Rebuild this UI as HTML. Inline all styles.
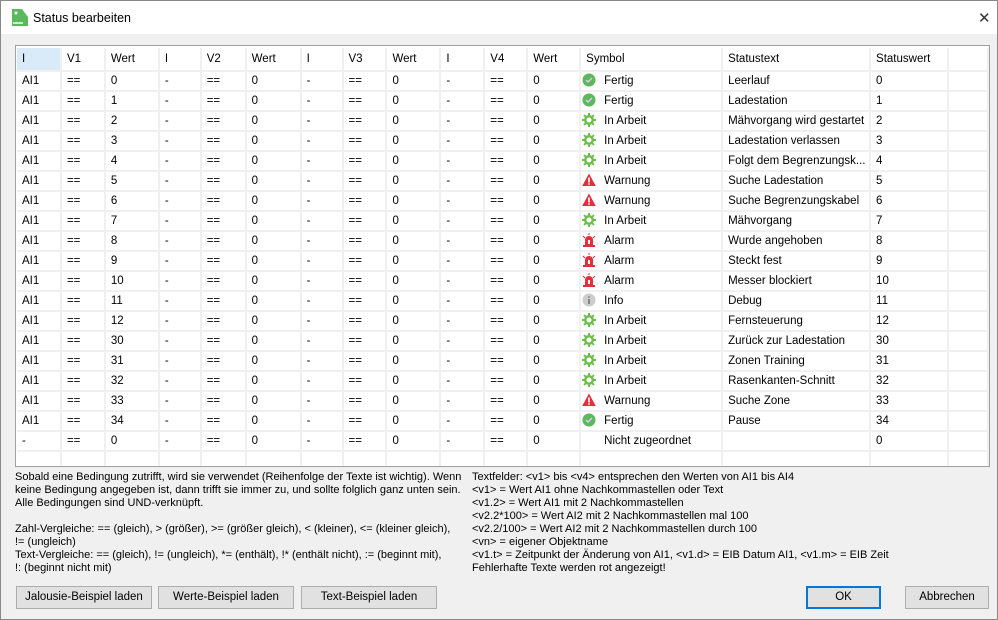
<!DOCTYPE html>
<html><head><meta charset="utf-8"><style>
*{margin:0;padding:0;box-sizing:border-box}
body{width:998px;height:620px;background:#f0f0f0;font-family:"Liberation Sans",sans-serif;font-size:11.5px;color:#000;position:relative;overflow:hidden}
.win{position:absolute;left:0;top:0;width:998px;height:620px;border:1px solid #888;background:#f0f0f0}
.title{position:absolute;left:0;top:0;width:996px;height:33px;background:#fff}
.title .t{position:absolute;left:32px;top:10px;font-size:12.5px}
.close{position:absolute;left:977px;top:8px;font-size:15px;color:#333}
.box{position:absolute;left:14px;top:44px;width:975px;height:422px;border:1px solid #a0a0a0;background:#fff;overflow:hidden}
table{border-collapse:collapse;table-layout:fixed;position:absolute;left:1px;top:2px}
td{height:20px;border-right:2px solid #f0f0f0;border-bottom:2px solid #f0f0f0;padding-left:5px;white-space:nowrap;overflow:hidden;vertical-align:middle}
tr.h td{height:23px;border-bottom:2px solid #f0f0f0}
td.s{padding-left:1px}
.ic{display:inline-block;width:14px;height:14px;vertical-align:middle;margin-right:8px;position:relative;top:-1px}
.txt{position:absolute;font-size:11px;line-height:13px;white-space:nowrap}
.btn{position:absolute;top:585px;height:23px;border:1px solid #adadad;background:#e1e1e1;text-align:center;line-height:21px;font-size:11.5px}
</style></head><body><div class="win">
<div class="title"><svg style="position:absolute;left:11px;top:8px" width="16" height="17"><path d="M0 0h10l6 8v9H0z" fill="#5cb85c"/><circle cx="4" cy="4" r="1.5" fill="#fff"/><rect x="1" y="13" width="10" height="2" fill="#c8f0c8"/></svg><span class="t">Status bearbeiten</span><span class="close">✕</span></div>
<div class="box"><table id="tb">
<colgroup><col style="width:44px"><col style="width:44px"><col style="width:54px"><col style="width:42px"><col style="width:45px"><col style="width:55px"><col style="width:42px"><col style="width:44px"><col style="width:54px"><col style="width:44px"><col style="width:43px"><col style="width:53px"><col style="width:142px"><col style="width:148px"><col style="width:78px"><col style="width:40px"></colgroup>
<tr class="h"><td style="background:#d9ebf9">I</td><td>V1</td><td>Wert</td><td>I</td><td>V2</td><td>Wert</td><td>I</td><td>V3</td><td>Wert</td><td>I</td><td>V4</td><td>Wert</td><td>Symbol</td><td>Statustext</td><td>Statuswert</td><td></td></tr>
<tbody id="bd"></tbody></table></div>
<div class="txt" style="left:14px;top:470px">Sobald eine Bedingung zutrifft, wird sie verwendet (Reihenfolge der Texte ist wichtig). Wenn<br>keine Bedingung angegeben ist, dann trifft sie immer zu, und sollte folglich ganz unten sein.<br>Alle Bedingungen sind UND-verknüpft.<br><br>Zahl-Vergleiche: == (gleich), &gt; (größer), &gt;= (größer gleich), &lt; (kleiner), &lt;= (kleiner gleich),<br>!= (ungleich)<br>Text-Vergleiche: == (gleich), != (ungleich), *= (enthält), !* (enthält nicht), := (beginnt mit),<br>!: (beginnt nicht mit)</div>
<div class="txt" style="left:471px;top:470px">Textfelder: &lt;v1&gt; bis &lt;v4&gt; entsprechen den Werten von AI1 bis AI4<br>&lt;v1&gt; = Wert AI1 ohne Nachkommastellen oder Text<br>&lt;v1.2&gt; = Wert AI1 mit 2 Nachkommastellen<br>&lt;v2.2*100&gt; = Wert AI2 mit 2 Nachkommastellen mal 100<br>&lt;v2.2/100&gt; = Wert AI2 mit 2 Nachkommastellen durch 100<br>&lt;vn&gt; = eigener Objektname<br>&lt;v1.t&gt; = Zeitpunkt der Änderung von AI1, &lt;v1.d&gt; = EIB Datum AI1, &lt;v1.m&gt; = EIB Zeit<br>Fehlerhafte Texte werden rot angezeigt!</div>
<div class="btn" style="left:15px;width:136px">Jalousie-Beispiel laden</div>
<div class="btn" style="left:157px;width:136px">Werte-Beispiel laden</div>
<div class="btn" style="left:300px;width:136px">Text-Beispiel laden</div>
<div class="btn" style="left:805px;width:75px;border:2px solid #0078d7;line-height:19px">OK</div>
<div class="btn" style="left:904px;width:84px">Abbrechen</div>
</div>
<script>
const I={F:'<svg class="ic" viewBox="0 0 14 14"><circle cx="7" cy="7" r="6.5" fill="#5cb85c"/><path d="M4 7l2 2 4-4" stroke="#e8c8f0" stroke-width="1.4" fill="none"/></svg>',
A:'<svg class="ic" viewBox="0 0 14 14"><g fill="#6cc04a"><circle cx="7" cy="7" r="5"/><rect x="6" y="0" width="2" height="14"/><rect x="0" y="6" width="14" height="2"/><rect x="6" y="0" width="2" height="14" transform="rotate(45 7 7)"/><rect x="6" y="0" width="2" height="14" transform="rotate(-45 7 7)"/></g><circle cx="7" cy="7" r="2.5" fill="#fff"/></svg>',
W:'<svg class="ic" viewBox="0 0 14 14"><path d="M7 0.5L13.8 13H0.2z" fill="#e0303c"/><rect x="6.2" y="4.5" width="1.6" height="5" fill="#fff"/><rect x="6.2" y="10.3" width="1.6" height="1.5" fill="#fff"/></svg>',
L:'<svg class="ic" viewBox="0 0 14 14"><path d="M3 13V7a4 4 0 0 1 8 0v6z" fill="#e0303c"/><rect x="1" y="12" width="12" height="2" fill="#e0303c"/><path d="M7 0v2M1 3l2 2M13 3l-2 2" stroke="#e0303c"/><rect x="6" y="7" width="2" height="4" fill="#fff"/></svg>',
N:'<svg class="ic" viewBox="0 0 14 14"><circle cx="7" cy="7" r="6.5" fill="#ccc"/><rect x="6.3" y="6" width="1.4" height="5" fill="#666"/><rect x="6.3" y="3.3" width="1.4" height="1.4" fill="#666"/></svg>'};
const N={F:'Fertig',A:'In Arbeit',W:'Warnung',L:'Alarm',N:'Info'};
const R=[['0','F','Leerlauf'],['1','F','Ladestation'],['2','A','Mähvorgang wird gestartet'],['3','A','Ladestation verlassen'],['4','A','Folgt dem Begrenzungsk...'],['5','W','Suche Ladestation'],['6','W','Suche Begrenzungskabel'],['7','A','Mähvorgang'],['8','L','Wurde angehoben'],['9','L','Steckt fest'],['10','L','Messer blockiert'],['11','N','Debug'],['12','A','Fernsteuerung'],['30','A','Zurück zur Ladestation'],['31','A','Zonen Training'],['32','A','Rasenkanten-Schnitt'],['33','W','Suche Zone'],['34','F','Pause']];
let h='';
for(const r of R){h+=`<tr><td>AI1</td><td>==</td><td>${r[0]}</td><td>-</td><td>==</td><td>0</td><td>-</td><td>==</td><td>0</td><td>-</td><td>==</td><td>0</td><td class="s">${I[r[1]]}${N[r[1]]}</td><td>${r[2]}</td><td>${r[0]}</td><td></td></tr>`;}
h+=`<tr><td>-</td><td>==</td><td>0</td><td>-</td><td>==</td><td>0</td><td>-</td><td>==</td><td>0</td><td>-</td><td>==</td><td>0</td><td style="padding-left:23px">Nicht zugeordnet</td><td></td><td>0</td><td></td></tr>`;
h+='<tr>'+'<td></td>'.repeat(16)+'</tr>';
document.getElementById('bd').innerHTML=h;
</script></body></html>
